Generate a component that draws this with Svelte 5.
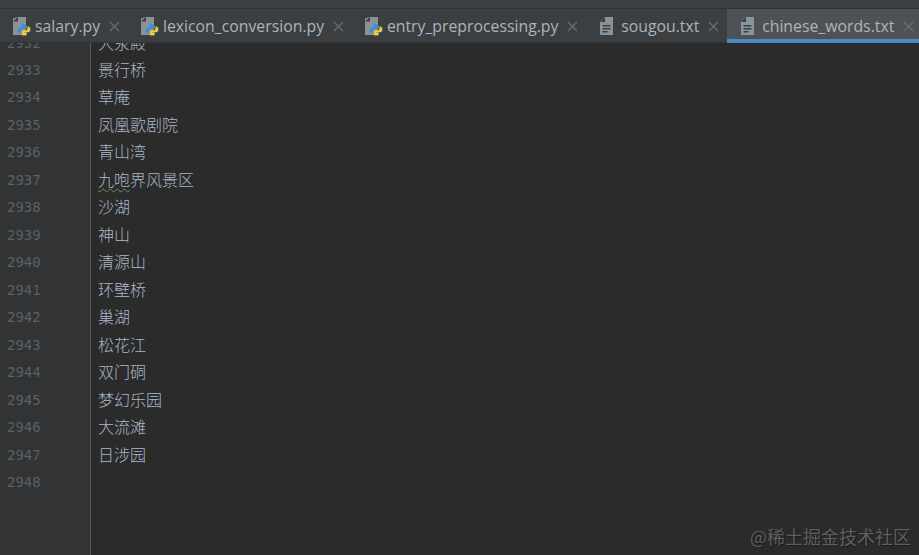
<script>
	const tabs = [
		{ name: 'salary.py', kind: 'py' },
		{ name: 'lexicon_conversion.py', kind: 'py' },
		{ name: 'entry_preprocessing.py', kind: 'py' },
		{ name: 'sougou.txt', kind: 'txt' },
		{ name: 'chinese_words.txt', kind: 'txt', active: true }
	];

	const words = [
		'大荥殿', '景行桥', '草庵', '凤凰歌剧院', '青山湾', '九咆界风景区', '沙湖', '神山',
		'清源山', '环壁桥', '巢湖', '松花江', '双门硐', '梦幻乐园', '大流滩', '日涉园', ''
	];
	const firstLine = 2932;
</script>

<div class="ide">
	<div class="topstrip"></div>
	<div class="tabbar">
		{#each tabs as tab}
			<div class="tab" class:active={tab.active}>
				{#if tab.kind === 'py'}
					<svg class="icon" width="22" height="20" viewBox="0 0 22 20">
						<path d="M1 2.5 L1 19 L14 19 L14 1 L6 1 Z" fill="#9aa7b0" opacity="0.8" />
						<path d="M6 1 L6 5.5 L1 5.5 Z" fill="#3c3f41" />
						<g transform="translate(2,1) scale(.8,.95)">
							<path d="M12 7.5 C9.5 7.5 9 8.4 9 9.5 L9 10.5 L13 10.5 L13 11 L7.5 11 C6 11 5 12 5 14 C5 16 6 17 7.5 17 L9 17 L9 15 C9 13.6 10 13 11 13 L14 13 C15.2 13 16 12.2 16 11 L16 9.5 C16 8.2 14.8 7.5 12 7.5 Z" fill="#3a8fd0" />
							<path d="M13 19.5 C15.5 19.5 16 18.6 16 17.5 L16 16.5 L12.5 16.5 L12.5 16 L18 16 C19.5 16 20.5 15 20.5 13 C20.5 11 19.5 10 18 10 L16.8 10 L16.8 12 C16.8 13.4 15.8 14 14.8 14 L11.5 14 C10.3 14 9.5 14.8 9.5 16 L9.5 17.5 C9.5 18.8 10.7 19.5 13 19.5 Z" fill="#f2c83c" />
						</g>
					</svg>
				{:else}
					<svg class="icon" width="22" height="20" viewBox="0 0 22 20">
						<path d="M2 5.5 L7 1 L15 1 L15 19 L2 19 Z" fill="#9aa7b0" opacity="0.8" />
						<path d="M7 1 L7 6 L2 6 Z" fill="#3c3f41" />
						<path d="M4.5 9 H12.5 V10.5 H4.5 Z M4.5 12 H12.5 V13.5 H4.5 Z M4.5 15 H9.5 V16.5 H4.5 Z" fill="#3c3f41" />
					</svg>
				{/if}
				<span class="name">{tab.name}</span>
				<svg class="close" width="11" height="11" viewBox="0 0 11 11">
					<path d="M1 1 L10 10 M10 1 L1 10" stroke="#6d7072" stroke-width="1.2" fill="none" />
				</svg>
			</div>
		{/each}
	</div>
	<div class="editor">
		<div class="rows">
			{#each words as word, i}
				<div class="row">
					<div class="num">{firstLine + i}</div>
					<div class="word">
						{#if word.startsWith('九咆')}
							<span class="typo">九咆</span>{word.slice(2)}
						{:else}
							{word}
						{/if}
					</div>
				</div>
			{/each}
		</div>
		<div class="fill"></div>
		<div class="mark">@稀土掘金技术社区</div>
	</div>
</div>

<style>
	:global(body) {
		margin: 0;
		background: #2b2b2b;
	}

	.ide {
		position: relative;
		display: flex;
		flex-direction: column;
		width: 919px;
		height: 555px;
		overflow: hidden;
	}

	.topstrip {
		height: 8px;
		background: #3c3f41;
		border-bottom: 1px solid #323232;
	}

	.tabbar {
		display: flex;
		height: 34px;
		background: #3c3f41;
		box-shadow: inset 0 -1px 0 #323232;
		font-family: "Open Sans", sans-serif;
		font-size: 15.8px;
		color: #a9b4bd;
	}

	.tab {
		display: flex;
		align-items: center;
		padding: 0 7.75px 0 12px;
		white-space: nowrap;
	}

	.tab.active {
		flex: 1;
		background: #4e5254;
		box-shadow: inset 0 -4px 0 #4a88c7;
		color: #b0b4b6;
	}

	.icon {
		margin-right: 1px;
	}

	.close {
		margin-left: 9px;
	}

	.editor {
		position: relative;
		flex: 1;
		display: flex;
		flex-direction: column;
		overflow: hidden;
		background: linear-gradient(to right, #313335 90px, #555759 90px, #555759 91px, #2b2b2b 91px);
	}

	.rows {
		margin-top: -13.5px;
	}

	.row {
		display: grid;
		grid-template-columns: 91px 1fr;
		height: 27.47px;
		line-height: 27.47px;
	}

	.num {
		padding-left: 7px;
		font-family: "DejaVu Sans Mono", monospace;
		font-size: 14px;
		color: #5c6164;
	}

	.word {
		padding-left: 7px;
		font-family: "Noto Sans CJK SC", sans-serif;
		font-size: 16px;
		font-weight: 300;
		line-height: 25.5px;
		color: #a9b7c6;
	}

	.typo {
		text-decoration: underline wavy #629755 1px;
		text-underline-offset: 2px;
	}

	.fill {
		flex: 1;
	}

	.mark {
		position: absolute;
		right: 8px;
		bottom: 7px;
		font-family: "Noto Sans CJK SC", sans-serif;
		font-size: 18px;
		line-height: 24px;
		color: #5e5e5e;
		text-shadow: 1px 1px 1px #1c1c1c;
	}
</style>
